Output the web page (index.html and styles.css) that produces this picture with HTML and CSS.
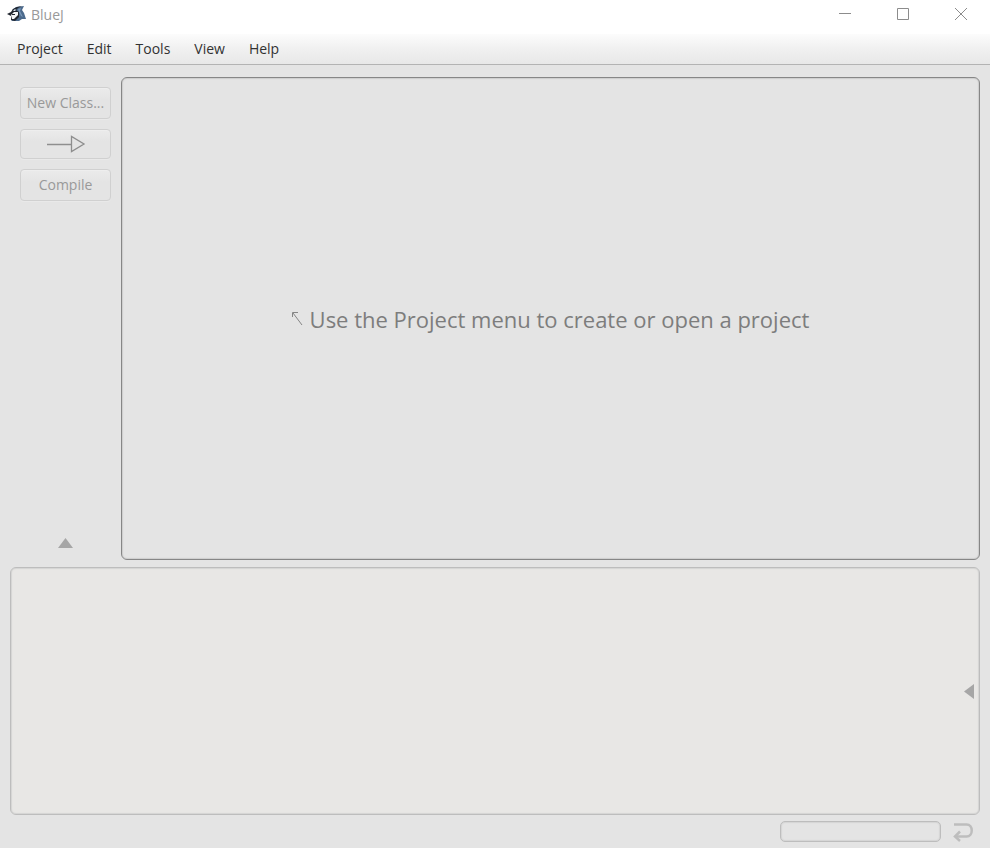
FILE: index.html
```html
<!DOCTYPE html>
<html lang="en">
<head>
<meta charset="utf-8">
<title>BlueJ</title>
<link rel="stylesheet" href="styles.css">
</head>
<body>
<header class="titlebar">
  <svg class="logo" width="20" height="16" viewBox="0 0 20 16" aria-hidden="true">
    <path d="M5 4 9 1 17 0 15 4 17 7 19 13 15 13 12 15 4 15 8 12 11 6Z" fill="#4c6a8c"/>
    <path d="M11 3 14 2 13 5 16 11 14 10 12 6Z" fill="#7897b8"/>
    <path d="M0 8 4 6 6 3 10 1 15 0 11 2 9 4 12 6 12 11 8 15 4 14 4 10Z" fill="#20262f"/>
    <path d="M4 9 7 6 11 6 11 9 9 11 7 13 5 13Z" fill="#f4f6f8"/>
    <path d="M6 5 8 3 9 4 8 5Z" fill="#dce4ec"/>
    <path d="M5 8H8V9H5Z" fill="#20262f"/>
  </svg>
  <h1 class="title">BlueJ</h1>
  <div class="window-controls">
    <button class="window-button" type="button" aria-label="Minimize"><svg width="12" height="12" viewBox="0 0 12 12"><path d="M0 5.5H12"/></svg></button>
    <button class="window-button" type="button" aria-label="Maximize"><svg width="12" height="12" viewBox="0 0 12 12"><path d="M.5 .5H11.5V11.5H.5Z"/></svg></button>
    <button class="window-button" type="button" aria-label="Close"><svg width="12" height="12" viewBox="0 0 12 12"><path d="M0 0 12 12M12 0 0 12"/></svg></button>
  </div>
</header>
<nav class="menubar">
  <button class="menu" type="button">Project</button>
  <button class="menu" type="button">Edit</button>
  <button class="menu" type="button">Tools</button>
  <button class="menu" type="button">View</button>
  <button class="menu" type="button">Help</button>
</nav>
<main class="workspace">
  <div class="upper">
    <aside class="sidebar">
      <button class="tool" type="button" disabled>New Class...</button>
      <button class="tool tool-arrow" type="button" aria-label="New inheritance arrow" disabled><svg width="40" height="18" viewBox="0 0 40 18"><path d="M1 9.5H25M25.5 1.5V16.5L38 9Z"/></svg></button>
      <button class="tool" type="button" disabled>Compile</button>
      <button class="expander" type="button" aria-label="Show team and test tools"><svg width="15" height="10" viewBox="0 0 15 10"><path d="M7.5 0 15 10H0Z"/></svg></button>
    </aside>
    <section class="diagram">
      <p class="hint"><svg class="hint-arrow" width="11" height="14" viewBox="0 0 11 14" aria-hidden="true"><path d="M10 13 1 1M.5 5V.5H6"/></svg>Use the Project menu to create or open a project</p>
    </section>
  </div>
  <section class="bench">
    <button class="expander" type="button" aria-label="Show code pad"><svg width="10" height="15" viewBox="0 0 10 15"><path d="M10 0V15L0 7.5Z"/></svg></button>
  </section>
  <footer class="status">
    <div class="progress" role="status"></div>
    <svg class="return" width="21" height="20" viewBox="0 0 21 20" aria-hidden="true"><path d="M1 2.5H13.5C20.500 2.500 20.500 14.500 13.5 14.5H3"/><path d="M7 9.5 2 14.5 7 19"/></svg>
  </footer>
</main>
</body>
</html>
```
FILE: styles.css
```css
* { box-sizing: border-box; }

body {
  margin: 0;
  height: 100vh;
  display: flex;
  flex-direction: column;
  background: #e4e4e4;
  color: #323232;
  font: 14px/20px "Open Sans", "Noto Sans", sans-serif;
}

button {
  margin: 0;
  padding: 0;
  border: 0;
  background: none;
  color: inherit;
  font: inherit;
}

svg { display: block; fill: none; }

.titlebar {
  display: flex;
  align-items: flex-start;
  height: 34px;
  flex: none;
  padding-left: 7px;
  background: #fff;
}

.logo { margin: 6px 4px 0 0; }

.title {
  margin: 5px 0 0;
  color: #999;
  font-size: 14px;
  line-height: 20px;
  font-weight: 400;
}

.window-controls { display: flex; margin-left: auto; }

.window-button {
  display: grid;
  place-items: center;
  width: 58px;
  height: 28px;
}

.window-button svg { stroke: #8c8c8c; }

.menubar {
  display: flex;
  flex: none;
  height: 31px;
  gap: 24px;
  padding: 0 17px;
  background: linear-gradient(#fcfcfc, #f0f0f0 50%, #e8e8e8);
  border-bottom: 1px solid #b3b3b3;
}

.workspace {
  display: flex;
  flex: 1;
  flex-direction: column;
  padding: 12px 10px 6px;
}

.upper { display: flex; flex: 483; }

.sidebar {
  display: flex;
  flex-direction: column;
  gap: 10px;
  width: 101px;
  margin-right: 10px;
  padding: 10px 0 12px 10px;
}

.tool {
  height: 32px;
  border: 1px solid #d0d0d0;
  border-radius: 4px;
  background: linear-gradient(#ebebeb, #e6e6e6 30%, #e4e4e4 40%);
  box-shadow: inset 0 1px #eee, 0 1px #e9e9e9;
  color: #999;
}

.tool-arrow {
  display: grid;
  place-items: center;
  height: 30px;
}

.tool-arrow svg { stroke: #8e8e8e; stroke-width: 1.3; }

.expander svg { fill: #a6a6a6; }
.sidebar .expander { align-self: center; margin-top: auto; }

.diagram {
  display: grid;
  place-items: center;
  flex: 1;
  border: 1px solid #868686;
  border-radius: 6px;
  box-shadow: inset 0 0 1px 1px #ccc;
}

.hint {
  display: flex;
  align-items: center;
  gap: 7px;
  margin: 0;
  color: #7d7d7d;
  font-size: 22px;
  line-height: 30px;
}

.hint-arrow { stroke: #858585; }

.bench {
  display: flex;
  flex: 246;
  align-items: center;
  justify-content: flex-end;
  margin-top: 7px;
  padding-right: 5px;
  border: 1px solid #bdbdbd;
  border-radius: 6px;
  background: #e8e7e5;
  box-shadow: inset 0 0 1px 1px #d4d4d3;
}

.status {
  display: flex;
  align-items: center;
  justify-content: flex-end;
  gap: 12px;
  margin-top: 6px;
  padding-right: 6px;
}

.progress {
  width: 161px;
  height: 21px;
  border: 1px solid #bdbdbd;
  border-radius: 5px;
  box-shadow: inset 0 0 1px 1px #d4d4d4;
}

.return { stroke: #bdbdbd; stroke-width: 2.5; }
```
